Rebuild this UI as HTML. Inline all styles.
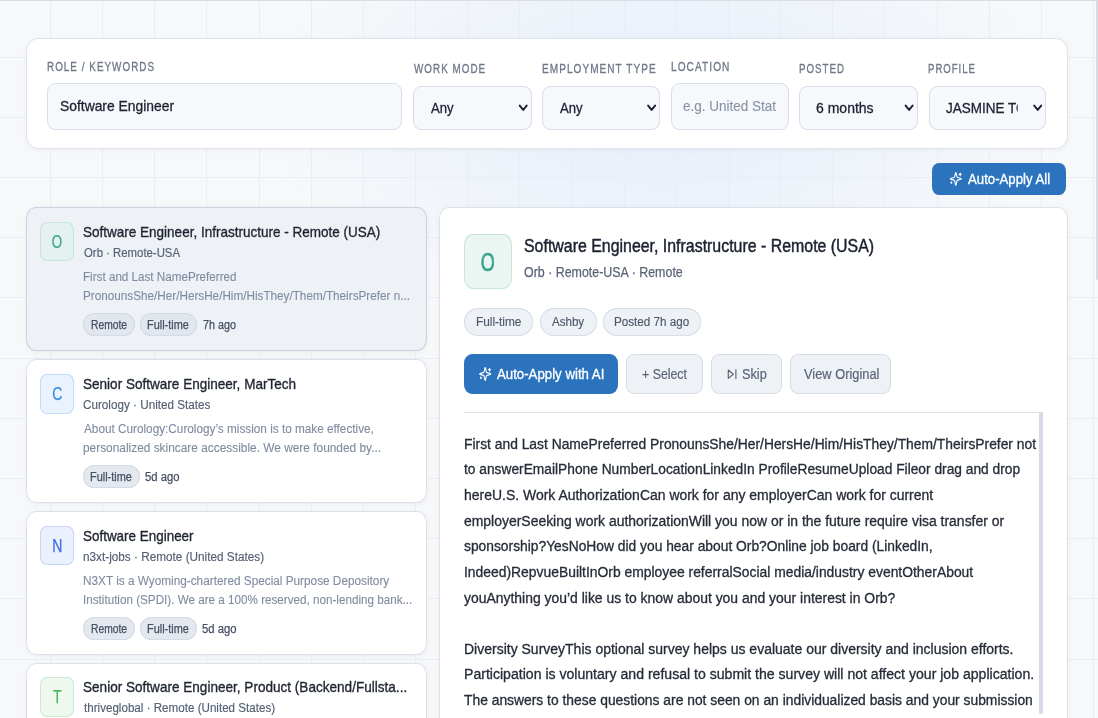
<!DOCTYPE html>
<html><head><meta charset="utf-8"><style>
html,body{margin:0;padding:0;}
body{width:1098px;height:718px;overflow:hidden;position:relative;background:#f7f8fa;font-family:"Liberation Sans",sans-serif;}
.bg{position:absolute;left:0;top:0;width:1098px;height:718px;background:radial-gradient(ellipse 400px 230px at 660px 110px, rgba(196,220,252,0.34), rgba(196,220,252,0) 100%);}
.b{position:absolute;box-sizing:border-box;}
.t{position:absolute;white-space:nowrap;transform-origin:0 0;}
.av{text-align:center;}
svg{position:absolute;left:0;top:0;}
</style></head><body>
<div class="bg"></div>
<svg width="1098" height="718" style="stroke:#e7eef8;stroke-width:1"><line x1="50.50" y1="0" x2="50.50" y2="718"/><line x1="102.50" y1="0" x2="102.50" y2="718"/><line x1="154.50" y1="0" x2="154.50" y2="718"/><line x1="206.50" y1="0" x2="206.50" y2="718"/><line x1="259.50" y1="0" x2="259.50" y2="718"/><line x1="311.50" y1="0" x2="311.50" y2="718"/><line x1="363.50" y1="0" x2="363.50" y2="718"/><line x1="415.50" y1="0" x2="415.50" y2="718"/><line x1="467.50" y1="0" x2="467.50" y2="718"/><line x1="519.50" y1="0" x2="519.50" y2="718"/><line x1="572.50" y1="0" x2="572.50" y2="718"/><line x1="624.50" y1="0" x2="624.50" y2="718"/><line x1="676.50" y1="0" x2="676.50" y2="718"/><line x1="728.50" y1="0" x2="728.50" y2="718"/><line x1="780.50" y1="0" x2="780.50" y2="718"/><line x1="832.50" y1="0" x2="832.50" y2="718"/><line x1="884.50" y1="0" x2="884.50" y2="718"/><line x1="937.50" y1="0" x2="937.50" y2="718"/><line x1="989.50" y1="0" x2="989.50" y2="718"/><line x1="1041.50" y1="0" x2="1041.50" y2="718"/><line x1="1093.50" y1="0" x2="1093.50" y2="718"/><line x1="0" y1="57.50" x2="1098" y2="57.50"/><line x1="0" y1="117.50" x2="1098" y2="117.50"/><line x1="0" y1="177.50" x2="1098" y2="177.50"/><line x1="0" y1="237.50" x2="1098" y2="237.50"/><line x1="0" y1="297.50" x2="1098" y2="297.50"/><line x1="0" y1="358.50" x2="1098" y2="358.50"/><line x1="0" y1="418.50" x2="1098" y2="418.50"/><line x1="0" y1="478.50" x2="1098" y2="478.50"/><line x1="0" y1="538.50" x2="1098" y2="538.50"/><line x1="0" y1="598.50" x2="1098" y2="598.50"/><line x1="0" y1="659.50" x2="1098" y2="659.50"/><line x1="0" y1="719.50" x2="1098" y2="719.50"/></svg>
<div class="b" style="left:26.0px;top:38.4px;width:1041.60px;height:110.60px;background:#ffffff;border-radius:12px/14px;box-shadow:inset 0 0 0 1px #dfe3eb;filter:drop-shadow(0 1px 2px rgba(30,40,60,0.05));"></div><div class="b" style="left:47.0px;top:83.4px;width:355.30px;height:46.20px;background:#f6f8fb;border-radius:8px/9px;box-shadow:inset 0 0 0 1px #d8dee8;"></div><div class="b" style="left:413.2px;top:86.0px;width:118.80px;height:43.60px;background:#f6f8fb;border-radius:8px/9px;box-shadow:inset 0 0 0 1px #d8dee8;"></div><div class="b" style="left:542.0px;top:86.0px;width:118.40px;height:43.60px;background:#f6f8fb;border-radius:8px/9px;box-shadow:inset 0 0 0 1px #d8dee8;"></div><div class="b" style="left:799.3px;top:86.0px;width:118.60px;height:43.60px;background:#f6f8fb;border-radius:8px/9px;box-shadow:inset 0 0 0 1px #d8dee8;"></div><div class="b" style="left:928.9px;top:86.0px;width:117.60px;height:43.60px;background:#f6f8fb;border-radius:8px/9px;box-shadow:inset 0 0 0 1px #d8dee8;"></div><div class="b" style="left:671.3px;top:83.4px;width:117.30px;height:46.20px;background:#f6f8fb;border-radius:8px/9px;box-shadow:inset 0 0 0 1px #d8dee8;"></div><div class="b" style="left:932.4px;top:163.3px;width:133.30px;height:32.00px;background:#2b73bd;border-radius:7px/8px;"></div><div class="b" style="left:26.0px;top:207.2px;width:400.50px;height:143.70px;background:#eef1f6;border-radius:10px/12px;box-shadow:inset 0 0 0 1px #cbd2dd;filter:drop-shadow(0 1px 2px rgba(30,40,60,0.06));"></div><div class="b" style="left:26.0px;top:359.3px;width:400.50px;height:143.70px;background:#ffffff;border-radius:10px/12px;box-shadow:inset 0 0 0 1px #dce1e9;filter:drop-shadow(0 1px 2px rgba(30,40,60,0.05));"></div><div class="b" style="left:26.0px;top:511.0px;width:400.50px;height:143.70px;background:#ffffff;border-radius:10px/12px;box-shadow:inset 0 0 0 1px #dce1e9;filter:drop-shadow(0 1px 2px rgba(30,40,60,0.05));"></div><div class="b" style="left:26.0px;top:662.6px;width:400.50px;height:143.70px;background:#ffffff;border-radius:10px/12px;box-shadow:inset 0 0 0 1px #dce1e9;filter:drop-shadow(0 1px 2px rgba(30,40,60,0.05));"></div><div class="b" style="left:40.0px;top:221.79999999999998px;width:33.70px;height:39.70px;background:#e5f1ef;border-radius:7px/8px;box-shadow:inset 0 0 0 1px #c4e5dc;"></div><div class="b" style="left:40.0px;top:373.90000000000003px;width:33.70px;height:39.70px;background:#eaf3fd;border-radius:7px/8px;box-shadow:inset 0 0 0 1px #c2dcf6;"></div><div class="b" style="left:40.0px;top:525.6px;width:33.70px;height:39.70px;background:#ebf0fd;border-radius:7px/8px;box-shadow:inset 0 0 0 1px #c9d5f8;"></div><div class="b" style="left:40.0px;top:677.2px;width:33.70px;height:39.70px;background:#eef8ef;border-radius:7px/8px;box-shadow:inset 0 0 0 1px #cce9cf;"></div><div class="b" style="left:83.2px;top:313.0px;width:51.60px;height:23.30px;background:#e2e7ee;border-radius:12px/12px;box-shadow:inset 0 0 0 1px #d5dbe5;"></div><div class="b" style="left:140.2px;top:313.0px;width:56.90px;height:23.30px;background:#e2e7ee;border-radius:12px/12px;box-shadow:inset 0 0 0 1px #d5dbe5;"></div><div class="b" style="left:83.2px;top:465.1px;width:56.80px;height:23.30px;background:#e4e8ef;border-radius:12px/12px;box-shadow:inset 0 0 0 1px #d5dbe5;"></div><div class="b" style="left:83.0px;top:616.8px;width:52.00px;height:23.30px;background:#e4e8ef;border-radius:12px/12px;box-shadow:inset 0 0 0 1px #d5dbe5;"></div><div class="b" style="left:140.3px;top:616.8px;width:56.80px;height:23.30px;background:#e4e8ef;border-radius:12px/12px;box-shadow:inset 0 0 0 1px #d5dbe5;"></div><div class="b" style="left:439.2px;top:207.0px;width:628.50px;height:553.00px;background:#ffffff;border-radius:10px/12px;box-shadow:inset 0 0 0 1px #dde2ea;filter:drop-shadow(0 1px 2px rgba(30,40,60,0.05));"></div><div class="b" style="left:464.1px;top:234.1px;width:47.80px;height:54.70px;background:#ebf6f3;border-radius:9px/11px;box-shadow:inset 0 0 0 1px #c6e6dd;"></div><div class="b" style="left:464.0px;top:308.3px;width:69.10px;height:27.70px;background:#eef1f6;border-radius:14px/14px;box-shadow:inset 0 0 0 1px #d8dde7;"></div><div class="b" style="left:539.5px;top:308.3px;width:57.10px;height:27.70px;background:#eef1f6;border-radius:14px/14px;box-shadow:inset 0 0 0 1px #d8dde7;"></div><div class="b" style="left:603.0px;top:308.3px;width:97.80px;height:27.70px;background:#eef1f6;border-radius:14px/14px;box-shadow:inset 0 0 0 1px #d8dde7;"></div><div class="b" style="left:464.1px;top:354.1px;width:153.70px;height:39.90px;background:#2b73bd;border-radius:8px/9px;"></div><div class="b" style="left:626.2px;top:354.1px;width:76.50px;height:39.90px;background:#eef1f6;border-radius:8px/9px;box-shadow:inset 0 0 0 1px #d6dce6;"></div><div class="b" style="left:711.3px;top:354.1px;width:70.30px;height:39.90px;background:#eef1f6;border-radius:8px/9px;box-shadow:inset 0 0 0 1px #d6dce6;"></div><div class="b" style="left:790.2px;top:354.1px;width:100.50px;height:39.90px;background:#eef1f6;border-radius:8px/9px;box-shadow:inset 0 0 0 1px #d6dce6;"></div><div class="b" style="left:464.0px;top:412.4px;width:578.80px;height:1.00px;background:#dfe4ec;border-radius:0px/0px;"></div><div class="b" style="left:1039.2px;top:412.4px;width:3.60px;height:301.20px;background:#d5dae6;border-radius:0px/0px;border-radius:0 0 1.8px 1.8px;"></div><div class="b" style="left:0px;top:0px;width:1098.00px;height:1.00px;background:#d9dde6;border-radius:0px/0px;"></div><div class="b" style="left:1096.2px;top:0px;width:2.30px;height:279.80px;background:#d6dae4;border-radius:0px/0px;border-radius:0 0 1px 1.5px;"></div>
<svg width="1098" height="718"><polyline points="519.70,105.6 523.20,109.9 526.70,105.6" fill="none" stroke="#1b2130" stroke-width="1.9" stroke-linecap="round" stroke-linejoin="round"/><polyline points="648.10,105.6 651.60,109.9 655.10,105.6" fill="none" stroke="#1b2130" stroke-width="1.9" stroke-linecap="round" stroke-linejoin="round"/><polyline points="905.60,105.6 909.10,109.9 912.60,105.6" fill="none" stroke="#1b2130" stroke-width="1.9" stroke-linecap="round" stroke-linejoin="round"/><polyline points="1034.20,105.6 1037.70,109.9 1041.20,105.6" fill="none" stroke="#1b2130" stroke-width="1.9" stroke-linecap="round" stroke-linejoin="round"/><g transform="translate(949.27,171.30) scale(0.5437,0.6250)" fill="none" stroke="#ffffff" stroke-width="2" stroke-linecap="round" stroke-linejoin="round"><path d="M9.937 15.5A2 2 0 0 0 8.5 14.063l-6.135-1.582a.5.5 0 0 1 0-.962L8.5 9.936A2 2 0 0 0 9.937 8.5l1.582-6.135a.5.5 0 0 1 .963 0L14.063 8.5A2 2 0 0 0 15.5 9.937l6.135 1.581a.5.5 0 0 1 0 .964L15.5 14.063a2 2 0 0 0-1.437 1.437l-1.582 6.135a.5.5 0 0 1-.963 0z"/><path d="M20 3v4"/><path d="M22 5h-4"/><path d="M4 17v2"/><path d="M5 18H3"/></g><g transform="translate(478.68,366.50) scale(0.5437,0.6250)" fill="none" stroke="#ffffff" stroke-width="2" stroke-linecap="round" stroke-linejoin="round"><path d="M9.937 15.5A2 2 0 0 0 8.5 14.063l-6.135-1.582a.5.5 0 0 1 0-.962L8.5 9.936A2 2 0 0 0 9.937 8.5l1.582-6.135a.5.5 0 0 1 .963 0L14.063 8.5A2 2 0 0 0 15.5 9.937l6.135 1.581a.5.5 0 0 1 0 .964L15.5 14.063a2 2 0 0 0-1.437 1.437l-1.582 6.135a.5.5 0 0 1-.963 0z"/><path d="M20 3v4"/><path d="M22 5h-4"/><path d="M4 17v2"/><path d="M5 18H3"/></g><g fill="none" stroke="#5a6477" stroke-width="1.15" stroke-linejoin="round" stroke-linecap="round"><path d="M728.3 370.0 L733.3 374.2 L728.3 378.4 Z"/><path d="M735.9 369.8 V378.6"/></g></svg>
<div class="t av" style="left:40.3px;top:223.0px;width:33.7px;height:39.7px;line-height:39.7px;font-size:17.5px;color:#3aa58b;-webkit-text-stroke:0.25px #3aa58b;"><span style="display:inline-block;transform:scaleX(0.76)">O</span></div><div class="t av" style="left:40.3px;top:375.1px;width:33.7px;height:39.7px;line-height:39.7px;font-size:17.5px;color:#3a8be0;-webkit-text-stroke:0.25px #3a8be0;"><span style="display:inline-block;transform:scaleX(0.8)">C</span></div><div class="t av" style="left:40.3px;top:526.8px;width:33.7px;height:39.7px;line-height:39.7px;font-size:17.5px;color:#3d6de6;-webkit-text-stroke:0.25px #3d6de6;"><span style="display:inline-block;transform:scaleX(0.8)">N</span></div><div class="t av" style="left:40.3px;top:678.4px;width:33.7px;height:39.7px;line-height:39.7px;font-size:17.5px;color:#47b45a;-webkit-text-stroke:0.25px #47b45a;"><span style="display:inline-block;transform:scaleX(0.8)">T</span></div><div class="t av" style="left:464.1px;top:235.0px;width:47.8px;height:54.7px;line-height:54.7px;font-size:25px;color:#3ba38b;-webkit-text-stroke:0.7px #3ba38b;"><span style="display:inline-block;transform:scaleX(0.72)">O</span></div>
<div class="t" style="left:46.81px;top:60.70px;font-size:12.5px;line-height:12.5px;font-weight:400;color:#6f7788;transform:scaleX(0.7896);letter-spacing:1.3px;-webkit-text-stroke:0.32px #6f7788;">ROLE / KEYWORDS</div><div class="t" style="left:413.70px;top:63.20px;font-size:12.5px;line-height:12.5px;font-weight:400;color:#6f7788;transform:scaleX(0.7878);letter-spacing:1.3px;-webkit-text-stroke:0.32px #6f7788;">WORK MODE</div><div class="t" style="left:541.70px;top:63.20px;font-size:12.5px;line-height:12.5px;font-weight:400;color:#6f7788;transform:scaleX(0.8036);letter-spacing:1.3px;-webkit-text-stroke:0.32px #6f7788;">EMPLOYMENT TYPE</div><div class="t" style="left:670.79px;top:60.70px;font-size:12.5px;line-height:12.5px;font-weight:400;color:#6f7788;transform:scaleX(0.8100);letter-spacing:1.3px;-webkit-text-stroke:0.32px #6f7788;">LOCATION</div><div class="t" style="left:799.02px;top:63.20px;font-size:12.5px;line-height:12.5px;font-weight:400;color:#6f7788;transform:scaleX(0.7772);letter-spacing:1.3px;-webkit-text-stroke:0.32px #6f7788;">POSTED</div><div class="t" style="left:928.13px;top:63.20px;font-size:12.5px;line-height:12.5px;font-weight:400;color:#6f7788;transform:scaleX(0.7667);letter-spacing:1.3px;-webkit-text-stroke:0.32px #6f7788;">PROFILE</div><div class="t" style="left:60.24px;top:99.10px;font-size:14.5px;line-height:14.5px;font-weight:400;color:#1b2130;transform:scaleX(0.9559);-webkit-text-stroke:0.3px #1b2130;">Software Engineer</div><div class="t" style="left:683.17px;top:99.10px;font-size:14.5px;line-height:14.5px;font-weight:400;color:#8792a4;transform:scaleX(0.9300);-webkit-text-stroke:0.1px #8792a4;width:100.36px;overflow:hidden;">e.g. United States</div><div class="t" style="left:430.70px;top:101.30px;font-size:14.5px;line-height:14.5px;font-weight:400;color:#1b2130;transform:scaleX(0.9040);-webkit-text-stroke:0.3px #1b2130;">Any</div><div class="t" style="left:559.50px;top:101.30px;font-size:14.5px;line-height:14.5px;font-weight:400;color:#1b2130;transform:scaleX(0.9040);-webkit-text-stroke:0.3px #1b2130;">Any</div><div class="t" style="left:815.63px;top:101.30px;font-size:14.5px;line-height:14.5px;font-weight:400;color:#1b2130;transform:scaleX(0.9661);-webkit-text-stroke:0.3px #1b2130;">6 months</div><div class="t" style="left:946.10px;top:101.30px;font-size:14.5px;line-height:14.5px;font-weight:400;color:#1b2130;transform:scaleX(0.9300);-webkit-text-stroke:0.3px #1b2130;width:76.88px;overflow:hidden;">JASMINE TOWNSEND</div><div class="t" style="left:967.90px;top:172.00px;font-size:14px;line-height:14px;font-weight:400;color:#ffffff;transform:scaleX(0.9425);-webkit-text-stroke:0.32px #ffffff;">Auto-Apply All</div><div class="t" style="left:82.80px;top:224.20px;font-size:15px;line-height:15px;font-weight:400;color:#1e2431;transform:scaleX(0.9006);-webkit-text-stroke:0.35px #1e2431;">Software Engineer, Infrastructure - Remote (USA)</div><div class="t" style="left:83.70px;top:246.90px;font-size:12px;line-height:12px;font-weight:400;color:#556073;transform:scaleX(0.9475);-webkit-text-stroke:0.15px #556073;">Orb · Remote-USA</div><div class="t" style="left:82.63px;top:271.00px;font-size:12px;line-height:12px;font-weight:400;color:#7f8ba0;transform:scaleX(0.9713);-webkit-text-stroke:0.1px #7f8ba0;">First and Last NamePreferred</div><div class="t" style="left:82.62px;top:289.80px;font-size:12px;line-height:12px;font-weight:400;color:#7f8ba0;transform:scaleX(0.9766);-webkit-text-stroke:0.1px #7f8ba0;">PronounsShe/Her/HersHe/Him/HisThey/Them/TheirsPrefer n...</div><div class="t" style="left:82.80px;top:376.20px;font-size:15px;line-height:15px;font-weight:400;color:#1e2431;transform:scaleX(0.9030);-webkit-text-stroke:0.35px #1e2431;">Senior Software Engineer, MarTech</div><div class="t" style="left:82.73px;top:398.90px;font-size:12px;line-height:12px;font-weight:400;color:#556073;transform:scaleX(0.9744);-webkit-text-stroke:0.15px #556073;">Curology · United States</div><div class="t" style="left:83.60px;top:423.00px;font-size:12px;line-height:12px;font-weight:400;color:#7f8ba0;transform:scaleX(0.9803);-webkit-text-stroke:0.1px #7f8ba0;">About Curology:Curology’s mission is to make effective,</div><div class="t" style="left:82.61px;top:441.80px;font-size:12px;line-height:12px;font-weight:400;color:#7f8ba0;transform:scaleX(0.9900);-webkit-text-stroke:0.1px #7f8ba0;">personalized skincare accessible. We were founded by...</div><div class="t" style="left:82.80px;top:527.90px;font-size:15px;line-height:15px;font-weight:400;color:#1e2431;transform:scaleX(0.8959);-webkit-text-stroke:0.35px #1e2431;">Software Engineer</div><div class="t" style="left:82.72px;top:550.60px;font-size:12px;line-height:12px;font-weight:400;color:#556073;transform:scaleX(0.9803);-webkit-text-stroke:0.15px #556073;">n3xt-jobs · Remote (United States)</div><div class="t" style="left:82.62px;top:574.70px;font-size:12px;line-height:12px;font-weight:400;color:#7f8ba0;transform:scaleX(0.9820);-webkit-text-stroke:0.1px #7f8ba0;">N3XT is a Wyoming-chartered Special Purpose Depository</div><div class="t" style="left:82.63px;top:593.50px;font-size:12px;line-height:12px;font-weight:400;color:#7f8ba0;transform:scaleX(0.9724);-webkit-text-stroke:0.1px #7f8ba0;">Institution (SPDI). We are a 100% reserved, non-lending bank...</div><div class="t" style="left:82.80px;top:679.30px;font-size:15px;line-height:15px;font-weight:400;color:#1e2431;transform:scaleX(0.9042);-webkit-text-stroke:0.35px #1e2431;">Senior Software Engineer, Product (Backend/Fullsta...</div><div class="t" style="left:83.70px;top:702.00px;font-size:12px;line-height:12px;font-weight:400;color:#556073;transform:scaleX(0.9680);-webkit-text-stroke:0.15px #556073;">thriveglobal · Remote (United States)</div><div class="t" style="left:524.22px;top:237.40px;font-size:18px;line-height:18px;font-weight:400;color:#1b2130;transform:scaleX(0.8838);-webkit-text-stroke:0.45px #1b2130;">Software Engineer, Infrastructure - Remote (USA)</div><div class="t" style="left:524.24px;top:264.90px;font-size:14.5px;line-height:14.5px;font-weight:400;color:#5a6477;transform:scaleX(0.8565);-webkit-text-stroke:0.25px #5a6477;">Orb · Remote-USA · Remote</div><div class="t" style="left:475.85px;top:316.00px;font-size:12.5px;line-height:12.5px;font-weight:400;color:#4e586a;transform:scaleX(0.9468);-webkit-text-stroke:0.15px #4e586a;">Full-time</div><div class="t" style="left:552.10px;top:316.00px;font-size:12.5px;line-height:12.5px;font-weight:400;color:#4e586a;transform:scaleX(0.9257);-webkit-text-stroke:0.15px #4e586a;">Ashby</div><div class="t" style="left:614.37px;top:316.00px;font-size:12.5px;line-height:12.5px;font-weight:400;color:#4e586a;transform:scaleX(0.9329);-webkit-text-stroke:0.15px #4e586a;">Posted 7h ago</div><div class="t" style="left:497.30px;top:366.50px;font-size:14px;line-height:14px;font-weight:400;color:#ffffff;transform:scaleX(0.9451);-webkit-text-stroke:0.32px #ffffff;">Auto-Apply with AI</div><div class="t" style="left:642.20px;top:366.90px;font-size:14px;line-height:14px;font-weight:400;color:#5a6477;transform:scaleX(0.8824);-webkit-text-stroke:0.18px #5a6477;">+ Select</div><div class="t" style="left:742.49px;top:366.90px;font-size:14px;line-height:14px;font-weight:400;color:#5a6477;transform:scaleX(0.9077);-webkit-text-stroke:0.18px #5a6477;">Skip</div><div class="t" style="left:803.80px;top:366.90px;font-size:14px;line-height:14px;font-weight:400;color:#5a6477;transform:scaleX(0.9173);-webkit-text-stroke:0.18px #5a6477;">View Original</div><div class="t" style="left:463.81px;top:436.80px;font-size:14px;line-height:14px;font-weight:400;color:#262c38;transform:scaleX(0.9882);-webkit-text-stroke:0.3px #262c38;">First and Last NamePreferred PronounsShe/Her/HersHe/Him/HisThey/Them/TheirsPrefer not</div><div class="t" style="left:463.82px;top:462.42px;font-size:14px;line-height:14px;font-weight:400;color:#262c38;transform:scaleX(0.9829);-webkit-text-stroke:0.3px #262c38;">to answerEmailPhone NumberLocationLinkedIn ProfileResumeUpload Fileor drag and drop</div><div class="t" style="left:463.80px;top:488.04px;font-size:14px;line-height:14px;font-weight:400;color:#262c38;transform:scaleX(0.9972);-webkit-text-stroke:0.3px #262c38;">hereU.S. Work AuthorizationCan work for any employerCan work for current</div><div class="t" style="left:463.80px;top:513.66px;font-size:14px;line-height:14px;font-weight:400;color:#262c38;transform:scaleX(0.9959);-webkit-text-stroke:0.3px #262c38;">employerSeeking work authorizationWill you now or in the future require visa transfer or</div><div class="t" style="left:463.81px;top:539.28px;font-size:14px;line-height:14px;font-weight:400;color:#262c38;transform:scaleX(0.9865);-webkit-text-stroke:0.3px #262c38;">sponsorship?YesNoHow did you hear about Orb?Online job board (LinkedIn,</div><div class="t" style="left:463.81px;top:564.90px;font-size:14px;line-height:14px;font-weight:400;color:#262c38;transform:scaleX(0.9914);-webkit-text-stroke:0.3px #262c38;">Indeed)RepvueBuiltInOrb employee referralSocial media/industry eventOtherAbout</div><div class="t" style="left:463.81px;top:590.52px;font-size:14px;line-height:14px;font-weight:400;color:#262c38;transform:scaleX(0.9949);-webkit-text-stroke:0.3px #262c38;">youAnything you’d like us to know about you and your interest in Orb?</div><div class="t" style="left:463.80px;top:641.76px;font-size:14px;line-height:14px;font-weight:400;color:#262c38;transform:scaleX(0.9993);-webkit-text-stroke:0.3px #262c38;">Diversity SurveyThis optional survey helps us evaluate our diversity and inclusion efforts.</div><div class="t" style="left:463.79px;top:667.38px;font-size:14px;line-height:14px;font-weight:400;color:#262c38;transform:scaleX(1.0055);-webkit-text-stroke:0.3px #262c38;">Participation is voluntary and refusal to submit the survey will not affect your job application.</div><div class="t" style="left:463.81px;top:693.00px;font-size:14px;line-height:14px;font-weight:400;color:#262c38;transform:scaleX(0.9890);-webkit-text-stroke:0.3px #262c38;">The answers to these questions are not seen on an individualized basis and your submission</div><div class="t" style="left:90.54px;top:318.90px;font-size:12px;line-height:12px;font-weight:400;color:#465063;transform:scaleX(0.8585);-webkit-text-stroke:0.25px #465063;">Remote</div><div class="t" style="left:147.49px;top:318.90px;font-size:12px;line-height:12px;font-weight:400;color:#465063;transform:scaleX(0.9089);-webkit-text-stroke:0.25px #465063;">Full-time</div><div class="t" style="left:202.50px;top:318.90px;font-size:12px;line-height:12px;font-weight:400;color:#465063;transform:scaleX(0.8972);-webkit-text-stroke:0.25px #465063;">7h ago</div><div class="t" style="left:90.49px;top:470.90px;font-size:12px;line-height:12px;font-weight:400;color:#465063;transform:scaleX(0.9111);-webkit-text-stroke:0.25px #465063;">Full-time</div><div class="t" style="left:144.56px;top:470.90px;font-size:12px;line-height:12px;font-weight:400;color:#465063;transform:scaleX(0.9371);-webkit-text-stroke:0.25px #465063;">5d ago</div><div class="t" style="left:90.54px;top:622.60px;font-size:12px;line-height:12px;font-weight:400;color:#465063;transform:scaleX(0.8585);-webkit-text-stroke:0.25px #465063;">Remote</div><div class="t" style="left:147.49px;top:622.60px;font-size:12px;line-height:12px;font-weight:400;color:#465063;transform:scaleX(0.9089);-webkit-text-stroke:0.25px #465063;">Full-time</div><div class="t" style="left:201.56px;top:622.60px;font-size:12px;line-height:12px;font-weight:400;color:#465063;transform:scaleX(0.9371);-webkit-text-stroke:0.25px #465063;">5d ago</div>
</body></html>
